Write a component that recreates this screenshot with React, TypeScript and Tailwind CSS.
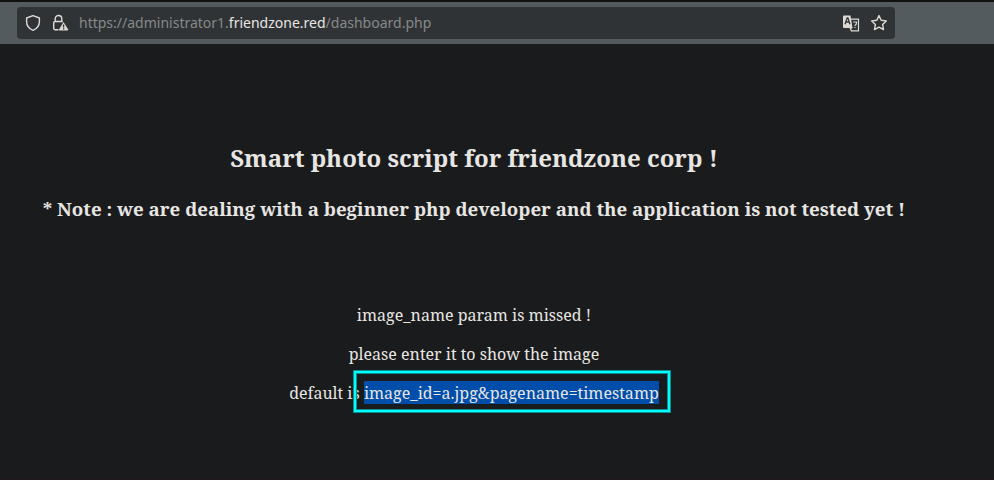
function ShieldIcon() {
  return (
    <svg width="16" height="18" viewBox="0 0 16 18" fill="none" stroke="#dddad6" strokeWidth="1.4" strokeLinejoin="round">
      <path d="M8 1.700 14.400 4v3.400c0 4.200-2.900 7.400-6.400 8.900-3.500-1.500-6.400-4.700-6.400-8.900V4Z" />
    </svg>
  );
}

function LockWarningIcon() {
  return (
    <svg width="17" height="18" viewBox="0 0 17 18" fill="none">
      <path d="M3.200 7.500V4.800a3.300 3.300 0 0 1 6.600 0v2.700M6.500 15.700H3.200a1.500 1.500 0 0 1-1.500-1.500V9a1.500 1.500 0 0 1 1.500-1.500h7.600" stroke="#dddad6" strokeWidth="1.400" />
      <path d="M11.500 8 16 15.300q.4 1.200-.9 1.200H8q-1.300 0-.8-1.200Z" fill="#dddad6" />
      <path d="M11.600 10.500v3M11.600 14.300v1.300" stroke="#303336" strokeWidth="1.300" />
    </svg>
  );
}

function TranslateIcon() {
  return (
    <svg width="17" height="17" viewBox="0 0 17 17" fill="none">
      <path d="M0 1.500Q0 .5 1 .5h6.500l2 12.500H1q-1 0-1-1Z" fill="#dddad6" />
      <path d="m2 9.200 2.200-6.400h.7l2 6.400M3 7h3.200" stroke="#303336" strokeWidth="1.300" />
      <path d="M8 4.200h7.500v11.600H8.400L7.200 13h2.200" stroke="#dddad6" strokeWidth="1.200" />
      <path d="M10.200 7h4M13.600 7.300c0 1.800-1.200 3-2 3.400M12 12v1" stroke="#dddad6" strokeWidth="1.200" />
    </svg>
  );
}

function StarIcon() {
  return (
    <svg width="18" height="18" viewBox="0 0 18 18" fill="none" stroke="#dddad6" strokeWidth="1.400" strokeLinejoin="round">
      <path d="m9 1.600 2.200 4.600 5.100.7-3.700 3.500.9 5.200L9 13.100l-4.500 2.500.9-5.200-3.700-3.500 5.100-.7Z" />
    </svg>
  );
}

export default function App() {
  return (
    <div className="flex h-[480px] w-[994px] flex-col overflow-hidden border-b border-[#221519] bg-[#1a1b1d]">
      <header className="h-11 border-t-2 border-[#101210] bg-[#545b5e] pt-[5px] pl-[17px]">
        <div className="flex h-8 w-[878px] items-center rounded-[4px] bg-[#303336] pr-[7px] pl-2">
          <ShieldIcon />
          <span className="ml-[11px]"><LockWarningIcon /></span>
          <div className="ml-[10px] flex-1 whitespace-nowrap font-['Noto_Sans',sans-serif] text-sm leading-5 text-[#878888]">
            https://administrator1.<span className="text-[#e8e6e3]">friendzone.red</span>/dashboard.php
          </div>
          <TranslateIcon />
          <span className="ml-[10px]"><StarIcon /></span>
        </div>
      </header>
      <main className="flex w-[948px] flex-col items-center whitespace-nowrap font-['Noto_Serif','DejaVu_Serif_Condensed','DejaVu_Serif',serif] text-[#e8e6e3]">
        <h1 className="mt-[98px] text-2xl leading-8 font-bold">Smart photo script for friendzone corp !</h1>
        <h2 className="mt-[22px] text-[18.720px] leading-[26px] font-bold">
          * Note : we are dealing with a beginner php developer and the application is not tested yet !
        </h2>
        <p className="mt-[82px] text-base leading-[23px]">image_name param is missed !</p>
        <p className="mt-4 text-base leading-[23px]">please enter it to show the image</p>
        <p className="mt-[15px] text-base leading-[23px]">
          default is{" "}
          <span className="relative inline-block bg-[#004daa] pt-px leading-[22px]">
            image_id=a.jpg&amp;pagename=timestamp
            <span className="absolute -top-[10px] -right-[11px] -bottom-[8px] -left-[10px] border-2 border-[#00ffff] shadow-[0_0_0_1px_#0d8d8e,inset_0_0_0_1px_#0d8d8e]" />
          </span>
        </p>
      </main>
    </div>
  );
}
